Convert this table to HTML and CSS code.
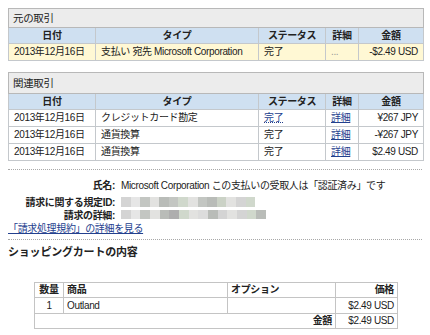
FILE: index.html
```html
<!DOCTYPE html>
<html lang="ja">
<head>
<meta charset="utf-8">
<link rel="stylesheet" href="styles.css">
</head>
<body>
<table class="tx">
  <colgroup><col class="c1"><col class="c2"><col class="c3"><col class="c4"><col class="c5"></colgroup>
  <tr class="ttl"><th colspan="5">元の取引</th></tr>
  <tr class="hd"><th>日付</th><th>タイプ</th><th>ステータス</th><th>詳細</th><th>金額</th></tr>
  <tr class="yl"><td>2013年12月16日</td><td>支払い 宛先 Microsoft Corporation</td><td>完了</td><td class="gray">...</td><td class="amt">-$2.49 USD</td></tr>
</table>

<table class="tx second">
  <colgroup><col class="c1"><col class="c2"><col class="c3"><col class="c4"><col class="c5"></colgroup>
  <tr class="ttl t2"><th colspan="5">関連取引</th></tr>
  <tr class="hd"><th>日付</th><th>タイプ</th><th>ステータス</th><th>詳細</th><th>金額</th></tr>
  <tr class="rw"><td>2013年12月16日</td><td>クレジットカード勘定</td><td><a class="dot" href="#">完了</a></td><td><a href="#">詳細</a></td><td class="amt">¥267 JPY</td></tr>
  <tr class="rw"><td>2013年12月16日</td><td>通貨換算</td><td>完了</td><td><a href="#">詳細</a></td><td class="amt">-¥267 JPY</td></tr>
  <tr class="rw"><td>2013年12月16日</td><td>通貨換算</td><td>完了</td><td><a href="#">詳細</a></td><td class="amt">$2.49 USD</td></tr>
</table>

<div class="sep first"></div>

<div class="info">
  <div class="row r1"><span class="lbl">氏名:</span><span class="val">Microsoft Corporation この支払いの受取人は「認証済み」です</span></div>
  <div class="row r2"><span class="lbl">請求に関する規定ID:</span><span class="mosaic m1"><i></i><i></i><i></i><i></i><i></i><i></i><i></i><i></i><i></i><i></i><i></i><i></i><i></i><i></i></span></div>
  <div class="row r3"><span class="lbl">請求の詳細:</span><span class="mosaic m2"><i></i><i></i><i></i><i></i><i></i><i></i><i></i><i></i><i></i><i></i><i></i><i></i><i></i><i></i><i></i></span></div>
  <div class="row r4"><a href="#">「請求処理規約」の詳細を見る</a></div>
</div>

<div class="sep"></div>

<h2 class="cart-title">ショッピングカートの内容</h2>

<table class="cart">
  <colgroup><col class="k1"><col class="k2"><col class="k3"><col class="k4"></colgroup>
  <tr class="chd"><th class="ctr">数量</th><th>商品</th><th>オプション</th><th class="amt">価格</th></tr>
  <tr class="crw"><td class="ctr">1</td><td>Outland</td><td></td><td class="amt">$2.49 USD</td></tr>
  <tr class="crw tot"><td colspan="3" class="amt"><b>金額</b></td><td class="amt">$2.49 USD</td></tr>
</table>
</body>
</html>
```

FILE: styles.css
```css
html, body {
  margin: 0;
  background: #ffffff;
}
body {
  padding: 8px;
  font-family: "Liberation Sans", "Noto Sans CJK JP", sans-serif;
  font-size: 10px;
  letter-spacing: -0.35px;
  color: #222222;
  width: 414px;
}
a {
  color: #23408e;
  text-decoration: underline;
}
a.dot {
  text-decoration: underline dotted;
  color: #23408e;
}

.tx {
  width: 415px;
  border-collapse: collapse;
  table-layout: fixed;
  border: 1px solid #b8b8b8;
}
.tx .c1 { width: 87px; }
.tx .c2 { width: 163px; }
.tx .c3 { width: 67px; }
.tx .c4 { width: 33px; }
.tx .c5 { width: 65px; }

.tx th, .tx td {
  border: 1px solid #c4c8cc;
  padding: 0 5px;
  white-space: nowrap;
  overflow: hidden;
  line-height: 12px;
}
.tx .ttl th {
  background: #ececec;
  text-align: left;
  font-weight: normal;
  font-size: 10.5px;
  height: 18px;
  padding: 0 4px;
  border-color: #b8b8b8;
}
.tx .t2 th { height: 20px; }
.tx .hd th {
  background: #cfe0f1;
  font-weight: bold;
  text-align: center;
  height: 15px;
}
.tx .yl td {
  background: #fff8d4;
  height: 16px;
}
.tx .rw td {
  height: 16px;
}
.tx td.amt { text-align: right; }
.tx td.gray { color: #999999; }

.second { margin-top: 11px; }

.sep {
  border-top: 1px dotted #a8a8a8;
  width: 414px;
}
.sep.first { margin-top: 8px; }

.info {
  padding-top: 8px;
  padding-bottom: 5px;
}
.row {
  display: flex;
  align-items: center;
  height: 13px;
}
.row.r2 { margin-top: 4px; }
.lbl {
  width: 107px;
  text-align: right;
  font-weight: bold;
  margin-right: 6px;
  flex: none;
}
.val { white-space: nowrap; }

.mosaic {
  display: flex;
  height: 10px;
}
.mosaic i {
  display: block;
  width: 10px;
  height: 10px;
  background: #d4d4d4;
}
.mosaic.m1 { width: 134px; }
.mosaic.m2 { width: 145px; height: 9px; }
.mosaic.m2 i { height: 9px; }
.mosaic i:nth-child(3n) { background: #c3c6c2; }
.mosaic i:nth-child(4n) { background: #e2e2e0; }
.mosaic i:nth-child(5n) { background: #b9bcb8; }
.mosaic i:nth-child(7n) { background: #d0d8cc; }
.mosaic i:nth-child(2) { background: #e6e6e6; }
.mosaic.m2 i:nth-child(6) { background: #aeaeae; }
.mosaic.m2 i:nth-child(9) { background: #dcdcdc; }
.mosaic.m1 i:nth-child(11) { background: #cbd2c6; }

.cart-title {
  margin: 6px 0 0 0;
  font-size: 11px;
  font-weight: bold;
  line-height: 13px;
  height: 13px;
  letter-spacing: -0.2px;
}

.cart {
  margin: 23px 0 0 26px;
  width: 364px;
  border-collapse: collapse;
  table-layout: fixed;
  border: 1px solid #b8b8b8;
}
.cart .k1 { width: 29px; }
.cart .k2 { width: 164px; }
.cart .k3 { width: 108px; }
.cart .k4 { width: 62px; }
.cart th, .cart td {
  border: 1px solid #c4c4c4;
  padding: 0 3px;
  line-height: 12px;
  white-space: nowrap;
  overflow: hidden;
  text-align: left;
}
.cart th {
  height: 14px;
  font-weight: bold;
}
.cart td { height: 15px; }
.cart .ctr { text-align: center; }
.cart .amt { text-align: right; }
.cart .tot td { height: 14px; }
```
